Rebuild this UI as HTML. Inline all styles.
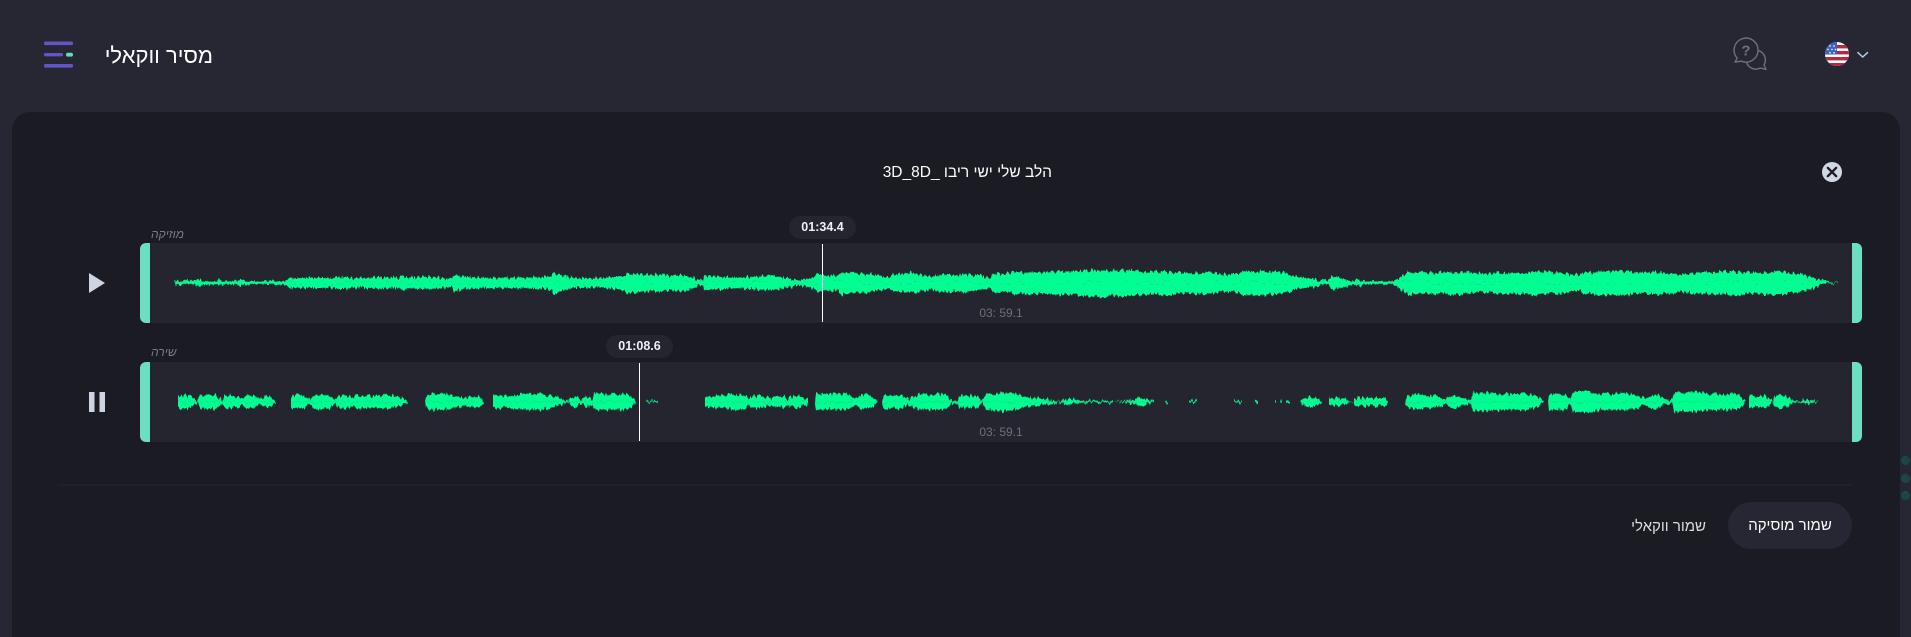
<!DOCTYPE html>
<html lang="he"><head><meta charset="utf-8"><title>מסיר ווקאלי</title>
<style>
html,body{margin:0;padding:0;width:1911px;height:637px;overflow:hidden;background:#272733}
body{position:relative;font-family:"Liberation Sans","Noto Sans CJK SC",sans-serif;color:#fff}
.a{position:absolute;white-space:nowrap}
.panel{left:12px;top:112px;width:1888px;height:540px;background:#1b1b23;border-radius:18px 18px 0 0}
.track{left:140px;width:1722px;height:80px;background:#252530;border-radius:6px}
.hl{left:140px;width:9.5px;height:80px;background:#6ae0c0;border-radius:6px 0 0 6px}
.hr{left:1851.5px;width:10.5px;height:80px;background:#6ae0c0;border-radius:0 6px 6px 0}
.ph{width:1px;height:78px;background:#fff}
.pill{height:23px;line-height:22px;text-align:center;background:#252530;border-radius:12px;font-size:12.5px;font-weight:bold;color:#eef0f4;width:67px}
.dur{left:901px;width:200px;text-align:center;font-size:12px;color:#6f6f78;line-height:14px}
.lab{left:151px;font-size:12px;font-style:italic;color:#7b7b86;line-height:14px}
.dot{left:1901px;width:9px;height:9px;border-radius:50%;background:#1c4748}
svg{position:absolute;left:0;top:0}
</style></head>
<body>
<div class="a panel"></div>
<div class="a" style="left:1900px;top:112px;width:11px;height:525px;background:#272733"></div>
<div class="a dot" style="top:456px"></div>
<div class="a dot" style="top:474px"></div>
<div class="a dot" style="top:491px"></div>

<div class="a" dir="rtl" style="left:90px;width:123px;top:43px;font-size:22px;line-height:26px;color:#fff;text-align:right">מסיר ווקאלי</div>
<div class="a" dir="rtl" style="left:752px;width:300px;top:163px;font-size:15.5px;line-height:20px;text-align:right;color:#fff">הלב שלי ישי ריבו _3D_8D</div>

<div class="a lab" dir="rtl" style="top:227px">מוזיקה</div>
<div class="a track" style="top:243px"></div>
<div class="a hl" style="top:243px"></div><div class="a hr" style="top:243px"></div>
<div class="a lab" dir="rtl" style="top:345px">שירה</div>
<div class="a track" style="top:362px"></div>
<div class="a hl" style="top:362px"></div><div class="a hr" style="top:362px"></div>

<svg width="1911" height="637" viewBox="0 0 1911 637" xmlns="http://www.w3.org/2000/svg">
<defs>
<filter id="j" filterUnits="userSpaceOnUse" x="140" y="240" width="1722" height="205" color-interpolation-filters="sRGB">
<feTurbulence type="fractalNoise" baseFrequency="0.45 0.09" numOctaves="2" seed="7" result="n"/>
<feColorMatrix in="n" type="matrix" values="0 0 0 0 0.5  0 2 0 0 -0.5  0 0 0 0 0  0 0 0 0 1" result="m"/>
<feDisplacementMap in="SourceGraphic" in2="m" scale="4" xChannelSelector="R" yChannelSelector="G"/>
</filter>
<clipPath id="fc"><circle cx="1837" cy="54" r="12"/></clipPath>
</defs>

<!-- hamburger -->
<g fill="#6156c6">
<rect x="44" y="41.5" width="29" height="3.6" rx="1.6"/>
<rect x="44" y="53" width="19" height="3.4" rx="1.6"/>
<rect x="44" y="64" width="29" height="3.6" rx="1.6"/>
</g>
<rect x="66" y="52.8" width="7" height="3.8" rx="1.9" fill="#62dcb9"/>

<!-- help -->
<g fill="none" stroke="#6f7175" stroke-width="1.4" stroke-linejoin="round">
<path d="M1741.5 61.2 L1735 62 L1737.2 58.2 A12 12 0 1 1 1741.5 61.2Z"/>
<path d="M1758.3 50.4 A10 10 0 0 1 1764 65 L1766 69.5 L1760.5 68 A10 10 0 0 1 1746.5 62.5"/>
</g>
<text x="1746" y="55.5" text-anchor="middle" font-size="15" font-weight="bold" fill="#6f7175" font-family="Liberation Sans, sans-serif">?</text>

<!-- flag -->
<g clip-path="url(#fc)">
<rect x="1825" y="42" width="24" height="24" fill="#fff"/>
<g fill="#b6293c">
<rect x="1837" y="45" width="12" height="3.4"/>
<rect x="1837" y="51" width="12" height="3.4"/>
<rect x="1825" y="57" width="24" height="3.4"/>
<rect x="1825" y="63" width="24" height="3.4"/>
</g>
<rect x="1825" y="42" width="12" height="12.5" fill="#3a62b8"/>
<g fill="#dfe6f5">
<circle cx="1830" cy="46" r=".9"/><circle cx="1834" cy="46" r=".9"/>
<circle cx="1828" cy="49.5" r=".9"/><circle cx="1832" cy="49.5" r=".9"/><circle cx="1835.5" cy="49.5" r=".9"/>
<circle cx="1830" cy="52.8" r=".9"/><circle cx="1834" cy="52.8" r=".9"/>
</g>
</g>
<path d="M1857.5 52.2 L1862.7 57 L1868 52.2" fill="none" stroke="#a9cfe6" stroke-width="1.5"/>

<!-- close -->
<circle cx="1832" cy="172" r="10" fill="#d0d8e4"/>
<path d="M1827.8 167.8 L1836.2 176.2 M1836.2 167.8 L1827.8 176.2" stroke="#1b1b23" stroke-width="2.3" stroke-linecap="round"/>

<!-- play / pause -->
<path d="M89 273 L105 283 L89 293Z" fill="#cfd4e2"/>
<rect x="89" y="392" width="5.5" height="20" fill="#cfd4e2"/>
<rect x="99.5" y="392" width="5.5" height="20" fill="#cfd4e2"/>

<!-- waveform 1 -->
<rect x="176" y="281.7" width="1650" height="2" fill="#00fe92"/>
<g filter="url(#j)" fill="#00fe92">
<g transform="translate(0,282.7)">
<polygon id="w1" points="174,0 175,-1 176,-1.5 195,-1.5 199,-4 203,-1.5 217,-1.5 219,-3.5 222,-1.5 238,-1.5 240,-3.5 245,-1.5 258,-1 275,-1.5 286,-2 290,-5 300,-4.5 317,-5 330,-4.5 342,-6 352,-4.5 370,-5 378,-5.5 400,-5 403,-7.5 408,-5 427,-6 440,-5 452,-4 454,-8.5 462,-6 480,-5 509,-5 525,-5 550,-6 554,-9.5 565,-6.5 574,-4.5 590,-4.5 603,-4.5 623,-7 629,-9.5 640,-7.5 656,-8 672,-6.5 680,-8 690,-6 703,-1.5 704,-7 720,-6 734,-5 754,-6 770,-7 785,-5 799,-2.5 810,-4 815,-6 818,-10 826,-7 838,-7 842,-11 855,-9 869,-9 880,-7 889,-5 893,-8 905,-9 911,-10 922,-8 930,-6 944,-8.5 955,-8 966,-8 980,-7 991,-4.5 993,-9 1005,-9 1020,-10.5 1035,-10 1048,-10 1069,-11.5 1085,-12 1101,-13 1115,-12 1130,-12 1150,-11 1171,-10.5 1190,-10 1211,-9.5 1232,-7.5 1244,-11.5 1262,-11 1283,-10.5 1295,-6 1312,-4 1328,-1.5 1332,-6.5 1342,-4.5 1353,-1.5 1357,-3.5 1365,-1.5 1377,-1 1393,-1 1397,-4 1403,-7 1408,-11 1420,-10 1434,-10 1459,-11 1481,-9 1500,-10 1516,-10 1536,-11 1560,-9.5 1581,-7.5 1585,-10 1610,-11.5 1635,-10.5 1659,-10.5 1683,-8 1700,-10 1720,-11 1750,-10.5 1785,-10.5 1797,-8.5 1810,-6 1822,-2 1830,-.7 1838,-.3 1838,0"/>
<use href="#w1" transform="scale(1,-1.08)"/>
</g>
<!-- waveform 2 -->
<g transform="translate(0,401.7) scale(1,1.12)">
<polygon id="w2" points="178,0 178,-5.5 186,-6 192,-4 197,-1 198,-1 200,-5 206,-6.5 215,-6 221,-2 222,-1 224,-5 232,-5.5 243,-3 245,-5 252,-5.5 258,-3 261,-3 268,-4.5 276,-.5 276,0 291,0 291,-5 298,-6 304,-5 310,-2 311,-2 313,-5 322,-7 330,-5.5 334,-2 335,-2 338,-5 346,-5.5 354,-3 356,-6 368,-5 380,-5 392,-5.5 403,-3 408,-.5 408,0 425,0 426,-5 430,-7 445,-6.5 458,-5 466,-3 468,-3 473,-5 480,-4 484,-.5 484,0 493,0 493,-5.5 510,-5.5 525,-7 540,-7 553,-5 566,-1 569,-1 571,-4 576,-4.5 580,-2 582,-2 585,-4.5 590,-4 593,-2 594,-6.5 610,-7 625,-7 632,-4 635,-1.5 636,0 646,0 646,-.7 658,-.7 658,0 705,0 705,-5 720,-5.5 735,-7 746,-6 749,-2 751,-5 762,-5 771,-2.5 773,-5 784,-4.5 788,-2 790,-3.5 798,-5.5 808,-2 808,0 815,0 816,-7 830,-6.5 846,-6.5 854,-3 856,-3 860,-6 868,-6 876,-2 878,0 882,0 884,-6 900,-6 909,-2.5 920,-6.5 945,-6.5 952,-1 958,-1 959,-5.5 978,-5 981,-1 983,-2 986,-7 1005,-8 1020,-6 1034,-3 1045,-2.5 1056,-1 1058,0 1060,-1 1070,-2.5 1081,-1 1083,-1 1085,-.8 1113,-.8 1113,0 1122,-.5 1135,-2 1140,-4 1146,-2 1154,-1 1154,0 1165,0 1165,-.6 1168,-.6 1168,0 1189,0 1189,-1 1197,-1 1197,0 1234,0 1234,-.7 1242,-.7 1242,0 1255,0 1255,-1.2 1258,-1.2 1258,0 1275,0 1275,-1.2 1276,-1.2 1276,0 1280,0 1281,-2.5 1282,0 1286,0 1286,-1.2 1290,-1.2 1290,0 1300,0 1303,-3 1310,-4.5 1317,-3 1322,-.5 1322,0 1329,0 1329,-3 1345,-3 1349,-.5 1354,0 1354,-3 1370,-3.5 1385,-3 1388,-.5 1388,0 1405,0 1407,-4 1415,-6 1435,-5 1446,-2 1449,-4 1455,-5.5 1465,-3 1471,-1.5 1473,-8 1490,-7.5 1510,-6.5 1525,-7 1537,-5 1542,-2 1544,0 1548,0 1549,-7 1565,-7 1571,-2 1573,-9 1590,-9 1600,-7 1615,-7 1630,-7 1646,-3 1650,-5 1656,-7 1663,-3 1665,-2 1672,-1.5 1674,-8 1690,-8.5 1710,-7 1730,-7 1740,-5 1744,-2 1746,0 1749,0 1749,-5 1765,-5 1771,-2 1773,0 1774,-4 1780,-6 1788,-4 1793,-1 1800,-.5 1805,-1.5 1812,-1.2 1818,-.3 1818,0"/>
<use href="#w2" transform="scale(1,-1.05)"/>
</g>
</g>
<rect x="58" y="484.5" width="1794" height="1" fill="#26262f"/>
</svg>

<div class="a ph" style="left:821.5px;top:244px"></div>
<div class="a ph" style="left:638.5px;top:363px"></div>
<div class="a pill" style="left:789px;top:216px">01:34.4</div>
<div class="a pill" style="left:606px;top:335px">01:08.6</div>
<div class="a dur" style="top:306px">03: 59.1</div>
<div class="a dur" style="top:425px">03: 59.1</div>

<div class="a" dir="rtl" style="left:1728px;top:502px;width:124px;height:47px;line-height:47px;border-radius:24px;background:#272733;text-align:center;font-size:15px;color:#fff">שמור מוסיקה</div>
<div class="a" dir="rtl" style="left:1606px;width:100px;top:518px;line-height:17px;font-size:15px;color:#dcdce0;text-align:right">שמור ווקאלי</div>
</body></html>
